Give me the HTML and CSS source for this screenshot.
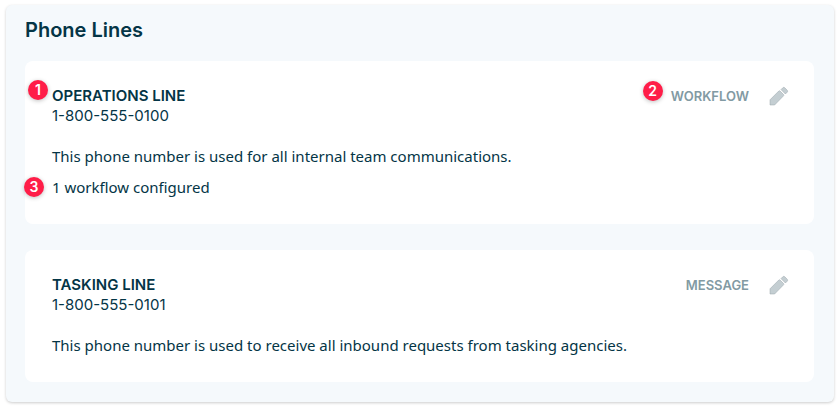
FILE: index.html
```html
<!DOCTYPE html>
<html lang="en">
<head>
<meta charset="utf-8">
<meta name="viewport" content="width=device-width, initial-scale=1">
<title>Phone Lines</title>
<link rel="stylesheet" href="styles.css">
</head>
<body>
<main class="panel">
  <h1 class="panel-title">Phone Lines</h1>
  <div class="lines">
    <article class="card">
      <header class="card-header">
        <div class="identity">
          <span class="badge badge-name">1</span>
          <h2 class="name">OPERATIONS LINE</h2>
          <p class="number">1-800-555-0100</p>
        </div>
        <div class="actions">
          <span class="kind"><span class="badge badge-kind">2</span>WORKFLOW</span>
          <button class="edit" type="button" aria-label="Edit Operations Line">
            <svg viewBox="0 0 18 18" aria-hidden="true"><path d="M0 12.8 8.8 4Q9.4 3.4 10 4L13.6 7.6Q14.2 8.2 13.6 8.8L4.6 18H0ZM11 2.6 12.8.8Q13.8-.2 14.8.8L17.2 3.2Q18.2 4.2 17.2 5.2L15.4 7Z"/></svg>
          </button>
        </div>
      </header>
      <p class="text">This phone number is used for all internal team communications.</p>
      <p class="text configured"><span class="badge badge-configured">3</span>1 workflow configured</p>
    </article>
    <article class="card">
      <header class="card-header">
        <div class="identity">
          <h2 class="name">TASKING LINE</h2>
          <p class="number">1-800-555-0101</p>
        </div>
        <div class="actions">
          <span class="kind">MESSAGE</span>
          <button class="edit" type="button" aria-label="Edit Tasking Line">
            <svg viewBox="0 0 18 18" aria-hidden="true"><path d="M0 12.8 8.8 4Q9.4 3.4 10 4L13.6 7.6Q14.2 8.2 13.6 8.8L4.6 18H0ZM11 2.6 12.8.8Q13.8-.2 14.8.8L17.2 3.2Q18.2 4.2 17.2 5.2L15.4 7Z"/></svg>
          </button>
        </div>
      </header>
      <p class="text">This phone number is used to receive all inbound requests from tasking agencies.</p>
    </article>
  </div>
</main>
</body>
</html>
```
FILE: styles.css
```css
* {
  box-sizing: border-box;
}

body {
  margin: 0;
  padding: 5px 6px 6px;
  background: #fff;
  color: #043546;
  font-family: "Noto Sans", sans-serif;
}

h1, h2, p {
  margin: 0;
}

.panel {
  padding: 13px 20px 20px 19px;
  background: #f5f9fc;
  border-radius: 6px;
  box-shadow: 0 1px 3px rgba(0, 0, 0, 0.2);
}

.panel-title {
  margin-bottom: 19px;
  font: 600 20px/24px Inter, sans-serif;
}

.lines {
  display: grid;
  gap: 26px;
}

.card {
  padding: 25px 26px 27px 27px;
  background: #fff;
  border-radius: 8px;
}

.card-header {
  display: flex;
  justify-content: space-between;
  margin-bottom: 20px;
}

.identity, .kind, .configured {
  position: relative;
}

.name {
  font: 600 15px/20px Inter, sans-serif;
}

.number {
  font: 400 15px/20px Inter, sans-serif;
}

.actions {
  display: flex;
  align-items: center;
  gap: 21px;
  height: 20px;
}

.kind {
  color: #829aa3;
  font: 600 13px/20px Inter, sans-serif;
}

.edit {
  width: 18px;
  height: 18px;
  padding: 0;
  border: 0;
  background: none;
  cursor: pointer;
}

.edit svg {
  display: block;
  width: 18px;
  height: 18px;
  overflow: visible;
  fill: #c4ced2;
  stroke: #98a5aa;
  stroke-width: 0.5;
}

.text {
  font-size: 15px;
  line-height: 20px;
}

.configured {
  margin-top: 11px;
}

.badge {
  position: absolute;
  width: 20px;
  height: 20px;
  border-radius: 50%;
  background: #ff1d48;
  box-shadow: 0 1px 4px rgba(0, 0, 0, 0.25);
  color: #fff;
  font: 600 14px/20px Inter, sans-serif;
  text-align: center;
}

.badge-name {
  top: -6px;
  left: -24px;
}

.badge-kind {
  top: -5px;
  right: 100%;
  margin-right: 8px;
}

.badge-configured {
  top: 0;
  left: -28px;
}
```
